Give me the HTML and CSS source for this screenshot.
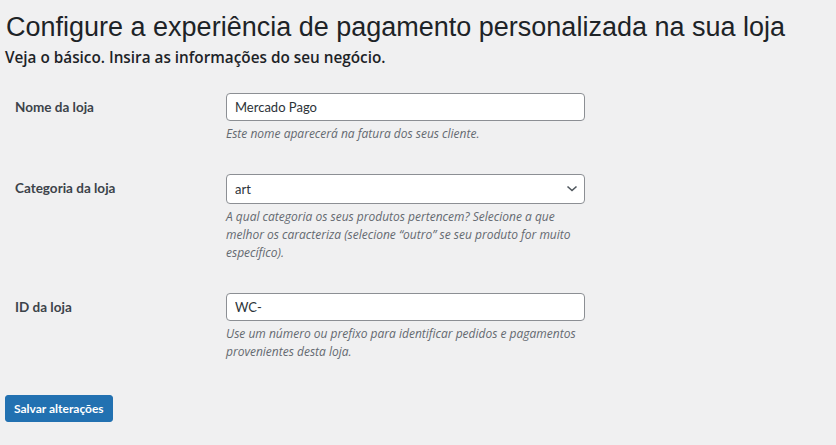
FILE: index.html
```html
<!DOCTYPE html>
<html lang="pt-BR">
<head>
  <meta charset="UTF-8" />
  <meta name="viewport" content="width=device-width, initial-scale=1.0" />
  <title>Configurar loja</title>
  <link rel="stylesheet" href="styles.css">
</head>
<body>
  <div class="wrap">
    <h1 class="title">Configure a experiência de pagamento personalizada na sua loja</h1>
    <p class="subtitle">Veja o básico. Insira as informações do seu negócio.</p>

    <form class="store-form" onsubmit="return false">
      <div class="field">
        <label for="store-name">Nome da loja</label>
        <div class="control">
          <input type="text" id="store-name" value="Mercado Pago" />
          <p class="description">Este nome aparecerá na fatura dos seus cliente.</p>
        </div>
      </div>

      <div class="field">
        <label for="store-category">Categoria da loja</label>
        <div class="control">
          <div class="select-box">
            <select id="store-category">
              <option>art</option>
              <option>outro</option>
            </select>
            <svg class="chevron" width="12" height="8" viewBox="0 0 12 8"><path d="M1.5 1.5 L6 5.5 L10.5 1.5" fill="none" stroke="#50575e" stroke-width="1.6"/></svg>
          </div>
          <p class="description">A qual categoria os seus produtos pertencem? Selecione a que melhor os caracteriza (selecione “outro” se seu produto for muito específico).</p>
        </div>
      </div>

      <div class="field">
        <label for="store-id">ID da loja</label>
        <div class="control">
          <input type="text" id="store-id" value="WC-" />
          <p class="description">Use um número ou prefixo para identificar pedidos e pagamentos provenientes desta loja.</p>
        </div>
      </div>

      <button type="submit" class="button-primary">Salvar alterações</button>
    </form>
  </div>
</body>
</html>
```

FILE: styles.css
```css
body {
  background-color: #f0f0f1;
  color: #1d2327;
  font-family: 'Open Sans', 'Noto Sans', sans-serif;
  margin: 0;
  padding: 0;
}
.wrap {
  padding: 11px 5px 0 5px;
}
.title {
  font-family: 'Liberation Sans', Arial, sans-serif;
  font-weight: 400;
  font-size: 27px;
  line-height: 32px;
  color: #1d2327;
  margin: 0 0 0 1px;
}
.subtitle {
  font-size: 15.3px;
  font-weight: 600;
  margin: 3px 0 0 0;
  line-height: 22px;
}
.store-form {
  margin-top: 25px;
}
.field {
  display: grid;
  grid-template-columns: 221px 359px;
  margin-bottom: 31px;
}
.field label {
  font-family: 'Lato', sans-serif;
  font-size: 13.5px;
  font-weight: 700;
  color: #3c434a;
  padding-left: 10px;
  line-height: 28px;
}
.control input,
.control select {
  box-sizing: border-box;
  width: 100%;
  height: 28px;
  border: 1px solid #8c8f94;
  border-radius: 4px;
  background: #fff;
  color: #2c3338;
  font-family: 'Lato', sans-serif;
  font-size: 13px;
  padding: 0 8px;
  margin: 0;
}
.select-box {
  position: relative;
}
.control select {
  height: 30px;
  appearance: none;
  -webkit-appearance: none;
  padding-left: 8px;
}
.chevron {
  position: absolute;
  right: 7px;
  top: 11px;
  pointer-events: none;
}
.description {
  font-size: 12px;
  font-style: italic;
  color: #646970;
  line-height: 18px;
  margin: 4px 0 0 0;
}
.button-primary {
  background-color: #2271b1;
  border: 1px solid #2271b1;
  border-radius: 3px;
  color: #fff;
  font-family: 'Lato', sans-serif;
  font-size: 12px;
  font-weight: 700;
  height: 27px;
  padding: 0 8px;
  margin-top: 3px;
  cursor: pointer;
}
```
